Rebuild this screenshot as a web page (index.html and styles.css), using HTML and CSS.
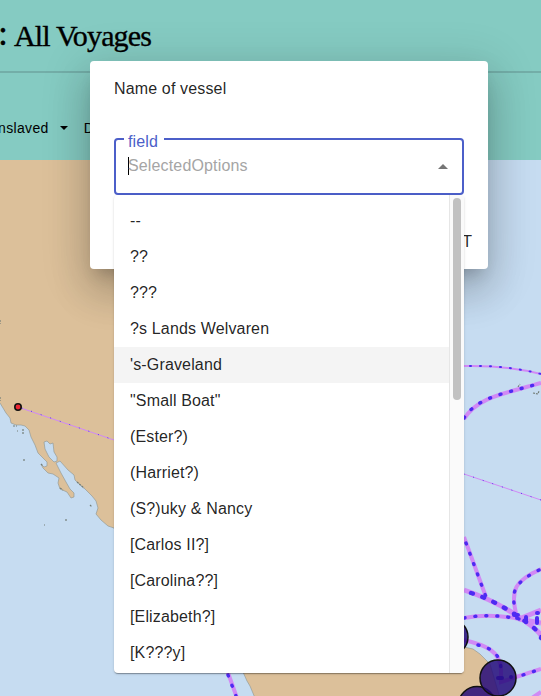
FILE: index.html
```html
<!DOCTYPE html>
<html lang="en">
<head>
<meta charset="utf-8">
<title>All Voyages</title>
<link rel="stylesheet" href="styles.css">
</head>
<body>
<div class="page">
  <header class="header">
    <h1 class="title"><span class="colon">:</span><span>All Voyages</span></h1>
    <nav class="nav">
      <span>nslaved</span>
      <svg class="caret" width="8" height="4" viewBox="0 0 8 4"><path d="M0 0h8L4 4z"/></svg>
      <span>Dates</span>
    </nav>
  </header>
  <svg class="map" width="541" height="536" viewBox="0 160 541 536">
    <rect y="160" width="541" height="536" fill="#c6dcf1"/>
    <g fill="#dcc09a" stroke="#8c9490" stroke-width=".6">
      <path d="M-2 158H300V540H120L114 528L108 526L101 520L96 514L98 508L96 501L92 496L85 489L77 482L75 480L74 475L68 470L60 461L56 463L61 473L66 482L70 489L74 493L74 497L71 498L67 492L60 489L58 483L59 478L53 474L48 473L43 468L41 464L44 467L47 466L47 462L42 457L38 453L35 445L31 437L29 430L25 426L21 425L16 425L11 423L10 418L6 413L3 408L0 403L-2 401Z"/>
      <path d="M243 672L247 681L250 686L255 698H500L490 664L480 654L473 649L464 647Z"/>
    </g>
    <path fill="#c6dcf1" stroke="#8c9490" stroke-width=".6" d="M44 442L47 441L50 444L53 443L54 452L57 457L57 461L54 462L49 457L45 449Z"/>
    <g fill="none" stroke="#747e78" stroke-width="1.2" stroke-dasharray="2 1">
      <path d="M0 320v4M0 397v4M13 426h4M17 431h1M23 429v5M24 459v2M66 519v3M44 525h1M90 505l2 2M518 387l2-3M533 393l5 1 1-3M41 464l2 2M60 488l3 2M77 482l7 6"/>
    </g>
    <g fill="none" stroke="#d18af5">
      <path stroke-width="1" d="M18 407L114 440M464 474L541 500"/>
      <path stroke-width="2" d="M464 366Q505 365 541 374"/>
      <path stroke-width="4" d="M464 419C478 396 508 393 541 383M464 537L486 597M464 618Q490 613 519 619M517 617C509 589 516 580 541 569M464 640C485 645 501 651 501 670V682L541 669M227 670L237 698M532 698L541 692"/>
      <path stroke-width="5" d="M464 590Q494 600 519 617T541 638M519 619L541 610M519 619L541 623"/>
    </g>
    <g fill="none" stroke="#4d2bf2" stroke-linecap="round">
      <path stroke-width="1" stroke-dasharray=".1 10" d="M22 408L114 440M464 474L541 500"/>
      <path stroke-width="2" stroke-dasharray="1 9" d="M470 366Q505 365 541 374"/>
      <path stroke-width="3.4" stroke-dasharray="1 10" d="M464 418C478 396 508 393 541 383M466 543L486 597M464 618Q490 613 519 619M514 603C512 588 519 580 541 569M478 645C490 648 501 653 501 670M523 675L541 669M228 675L236 696"/>
      <path stroke-width="4.4" stroke-dasharray="2 10" d="M471 593Q494 600 519 617T541 638"/>
      <path stroke-width="4" d="M514 615h4M517 618h.1M526 617v5M537 613h1M537 618v5M498 678h4M511 677h.1"/>
    </g>
    <circle cx="18" cy="407" r="3.2" fill="#ed2633" stroke="#111" stroke-width="1.6"/>
    <g fill="#24097a" fill-opacity=".84" stroke="#111" stroke-width="1.5">
      <circle cx="450" cy="637" r="18"/>
      <circle cx="477" cy="705" r="18.5"/>
      <circle cx="498" cy="678" r="18"/>
    </g>
  </svg>
</div>
<section class="dialog">
  <h2 class="heading">Name of vessel</h2>
  <div class="field">
    <span class="label">field</span>
    <span class="placeholder">SelectedOptions</span>
    <svg class="arrow" width="10" height="5" viewBox="0 0 10 5"><path d="M0 5h10L5 0z"/></svg>
  </div>
  <div class="action">T</div>
  <div class="menu">
    <ul class="options">
      <li>--</li>
      <li>??</li>
      <li>???</li>
      <li>?s Lands Welvaren</li>
      <li class="active">'s-Graveland</li>
      <li>"Small Boat"</li>
      <li>(Ester?)</li>
      <li>(Harriet?)</li>
      <li>(S?)uky &amp; Nancy</li>
      <li>[Carlos II?]</li>
      <li>[Carolina??]</li>
      <li>[Elizabeth?]</li>
      <li>[K???y]</li>
    </ul>
    <div class="track"><div class="thumb"></div></div>
  </div>
</section>
</body>
</html>
```

FILE: styles.css
```css
* { box-sizing: border-box; }
body { margin: 0; width: 541px; height: 696px; overflow: hidden; position: relative; font: 16px/24px "Liberation Sans", Arial, sans-serif; color: rgba(0,0,0,.87); }
.page { display: flex; flex-direction: column; }
.header { height: 160px; background: #85cbc2; color: #000; }
.title { margin: 0; height: 73px; padding-top: 14px; border-bottom: 2px solid #73aea8; display: flex; gap: 7px; font: 400 30px/44px "Liberation Serif", serif; letter-spacing: -.85px; white-space: nowrap; -webkit-text-stroke: .35px #000; }
.colon { width: 7px; font-size: 36px; line-height: 38px; text-indent: -2px; }
.nav { display: flex; align-items: center; height: 20px; margin-top: 45px; margin-left: -2px; font-size: 14px; line-height: 20px; letter-spacing: .35px; }
.caret { margin: 0 16px 0 11px; }
.map { display: block; }
.dialog { position: absolute; left: 90px; top: 61px; width: 398px; height: 208px; padding: 16px 24px; background: #fff; border-radius: 4px; box-shadow: 0 11px 15px -7px rgba(0,0,0,.2), 0 24px 38px 3px rgba(0,0,0,.14), 0 9px 46px 8px rgba(0,0,0,.12); }
.heading { margin: 0 0 37px; font-size: 16px; font-weight: 400; line-height: 24px; letter-spacing: .15px; }
.field { position: relative; height: 57px; border: 2px solid #4c5fc9; border-radius: 4px; padding: 0 14px 0 12px; display: flex; align-items: center; justify-content: space-between; }
.label { position: absolute; left: 8px; top: -9px; padding: 0 6px 0 4px; background: #fff; color: #4c5fc9; font-size: 16px; line-height: 22px; height: 20px; letter-spacing: .15px; }
.placeholder { height: 18px; line-height: 17px; border-left: 1px solid #000; color: #a5a5a5; margin-bottom: 2px; text-indent: -1px; letter-spacing: .15px; }
.arrow { fill: #757575; }
.action { width: 358px; margin-top: 37px; text-align: right; font-size: 16px; line-height: 20px; }
.menu { position: absolute; left: 24px; top: 134px; width: 350px; height: 478px; display: flex; overflow: hidden; background: #fff; border-radius: 4px; box-shadow: 0 2px 1px -1px rgba(0,0,0,.2), 0 1px 1px rgba(0,0,0,.14), 0 1px 3px rgba(0,0,0,.12); }
.options { list-style: none; flex: 1; margin: 0; padding: 8px 0; }
.options li { height: 36px; padding: 6px 16px; line-height: 24px; letter-spacing: .15px; white-space: nowrap; }
.options .active { background: #f4f4f4; }
.track { width: 15px; padding: 3px 2px 0 3px; background: #fafafa; border-left: 1px solid #e6e6e6; }
.thumb { width: 8px; height: 202px; border-radius: 4px; background: #c1c1c1; }
```
